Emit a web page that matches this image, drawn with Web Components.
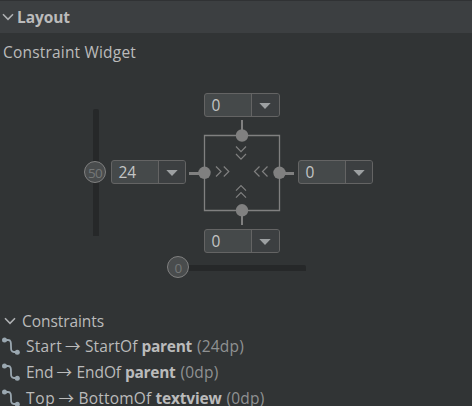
<!DOCTYPE html>
<html lang="en"><head><meta charset="utf-8"><title>Layout</title>
<style>
html,body{margin:0;width:472px;height:406px;overflow:hidden;background:#313435;color:#bbb;font:15.5px/26px "Open Sans","Noto Sans",sans-serif}
</style></head><body>
<layout-panel></layout-panel>
<script>
const define=(name,html,setup)=>customElements.define(name,class extends HTMLElement{
  constructor(){super();this.attachShadow({mode:'open'});}
  connectedCallback(){this.shadowRoot.innerHTML=typeof html==='function'?html(this):html;if(setup)setup(this);}
});

// A label that spreads its letters over a given width.
define('fit-label',`<style>:host{display:inline-block;white-space:pre;flex:none}span{display:inline-block}</style><span><slot></slot></span>`,el=>{
  const s=el.shadowRoot.querySelector('span'),w=+el.getAttribute('w');
  const n=el.textContent.length;
  s.style.letterSpacing=((w-s.getBoundingClientRect().width)/n)+'px';
  el.style.width=w+'px';
});

define('fold-chevron',`<style>:host{display:block;width:12px;height:8px;flex:none}svg{display:block}</style>
<svg width="12" height="8" fill="none" stroke="#afb1b3" stroke-width="1.6"><path d="M1 1.3 6 6.3 11 1.3"/></svg>`);

define('section-header',`<style>:host{display:flex;align-items:center;box-sizing:border-box;height:33px;padding:0 0 1px 2px;gap:3px;background:#3c3f41;border-top:1px solid #303234;font-weight:700;line-height:30px}</style><fold-chevron></fold-chevron><slot></slot>`);

define('margin-field',`<style>:host{display:flex;box-sizing:border-box;width:75px;height:24px;border:1px solid #646464;border-radius:3px;background:#45494a;overflow:hidden;line-height:22px;color:#c3c5c5}
.v{width:47px;box-sizing:border-box;padding-left:6.5px;border-right:1px solid #646464;font-size:15.5px}
.b{flex:1;background:#3c3f41;display:grid;place-items:center;padding:1px 1px 0 0}</style>
<div class="v"><slot></slot></div><div class="b"><svg width="12" height="6"><path d="M.3 0H11.7L6 6Z" fill="#9da0a2"/></svg></div>`);

define('bias-slider',`<style>:host{display:block;position:relative;background:#262829;border-radius:2px 2px 0 0}
div{position:absolute;box-sizing:border-box;width:22px;height:22px;border:1px solid #808080;border-radius:50%;background:#494c4d;color:#747777;font-size:13.5px;line-height:23px;text-align:center;letter-spacing:-.7px}
:host([vertical]) div{left:-9px;top:52px}
:host(:not([vertical])) div{left:-11px;top:-9px}</style><div><slot></slot></div>`);

define('constraint-widget',`<style>:host{display:block;position:relative;height:240px}
svg,margin-field,bias-slider{position:absolute}svg{left:0;top:0}
.t,.b{width:76px}
.t{left:204px;top:23px}.l{left:111px;top:90px}.r{left:298px;top:90px}.b{left:204px;top:159px}
.v{left:93px;top:39px;width:6px;height:127px}.h{left:178px;top:195px;width:128px;height:6px}</style>
<svg width="472" height="240" viewBox="0 70 472 240">
<g fill="none" stroke="#808080"><path stroke-width="1.3" d="M204.5 135.5H279.5V210.5H204.5Z"/>
<path stroke-width="2" d="M242 120V135M242 210V225"/><path stroke-width="3" d="M189 173.5H204M280 173.5H294"/>
<path stroke-width="1.2" d="M236 146.5 241 151.7 246 146.5M236 154 241 159.2 246 154M236 190.7 241 185.5 246 190.7M236 197.7 241 192.5 246 197.7M216 166.5 221 171.5 216 176.5M223.8 166.5 228.8 171.5 223.8 176.5M259.5 166.5 254.5 171.5 259.5 176.5M267.5 166.5 262.5 171.5 267.5 176.5"/></g>
<g fill="#808080"><circle cx="242" cy="135.5" r="6.2"/><circle cx="204.5" cy="172.8" r="6.2"/><circle cx="279.5" cy="172.8" r="6.2"/><circle cx="242" cy="210.3" r="6.2"/></g></svg>
<bias-slider class="v" vertical>50</bias-slider><bias-slider class="h">0</bias-slider>
<margin-field class="t">0</margin-field><margin-field class="l">24</margin-field><margin-field class="r">0</margin-field><margin-field class="b">0</margin-field>`);

define('constraint-row',el=>{const a=k=>el.getAttribute(k).split('|');const f=a('from'),t=a('to'),p=a('target'),m=a('margin');
return `<style>:host{display:flex;align-items:center;height:26px;padding-left:2px;flex:none}
svg{flex:none;margin:0 6px 1px 0}.a{font:15.5px/26px "Noto Sans CJK SC",sans-serif;width:16px;margin:0 4px 2px 3px}
b{margin:0 5px 0 4px;display:flex}.m{color:#8f9192}</style>
<svg width="18" height="18"><path d="M3 3H6C9 3 9 5.5 9 9S9 15 12 15H15" fill="none" stroke="#9aa7b0" stroke-width="1.8"/><g fill="#9aa7b0"><circle cx="2.5" cy="3" r="2.5"/><circle cx="15.3" cy="15.2" r="2.5"/></g></svg>
<fit-label w="${f[1]}">${f[0]}</fit-label><span class="a">→</span><fit-label w="${t[1]}">${t[0]}</fit-label><b><fit-label w="${p[1]}">${p[0]}</fit-label></b><fit-label class="m" w="${m[1]}">${m[0]}</fit-label>`});

define('layout-panel',`<style>:host{display:flex;flex-direction:column;width:472px;height:406px;overflow:hidden}
section-header,constraint-widget{flex:none}
.title{flex:none;height:37px;padding-left:3px;line-height:39px}
.list{flex:none;display:flex;align-items:center;box-sizing:border-box;height:23px;padding:0 0 2px 4px;gap:6px}</style>
<section-header><fit-label w="53">Layout</fit-label></section-header>
<div class="title"><fit-label w="133">Constraint Widget</fit-label></div>
<constraint-widget></constraint-widget>
<div class="list"><fold-chevron></fold-chevron><fit-label w="82">Constraints</fit-label></div>
<constraint-row from="Start|36" to="StartOf|52.5" target="parent|50.5" margin="(24dp)|47"></constraint-row>
<constraint-row from="End|27.5" to="EndOf|44.5" target="parent|50.5" margin="(0dp)|38"></constraint-row>
<constraint-row from="Top|29.5" to="BottomOf|73" target="textview|66" margin="(0dp)|38"></constraint-row>`);
</script></body></html>
